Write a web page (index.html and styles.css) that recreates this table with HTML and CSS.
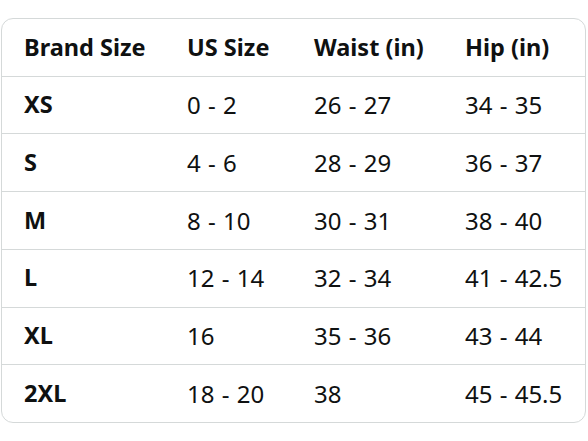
FILE: index.html
```html
<!DOCTYPE html>
<html>
<head>
<meta charset="utf-8">
<link rel="stylesheet" href="styles.css">
</head>
<body>
<div class="chart">
  <div class="row head">
    <div class="cell">Brand Size</div><div class="cell">US Size</div><div class="cell">Waist (in)</div><div class="cell">Hip (in)</div>
  </div>
  <div class="row">
    <div class="cell b">XS</div><div class="cell">0 - 2</div><div class="cell">26 - 27</div><div class="cell">34 - 35</div>
  </div>
  <div class="row">
    <div class="cell b">S</div><div class="cell">4 - 6</div><div class="cell">28 - 29</div><div class="cell">36 - 37</div>
  </div>
  <div class="row">
    <div class="cell b">M</div><div class="cell">8 - 10</div><div class="cell">30 - 31</div><div class="cell">38 - 40</div>
  </div>
  <div class="row">
    <div class="cell b">L</div><div class="cell">12 - 14</div><div class="cell">32 - 34</div><div class="cell">41 - 42.5</div>
  </div>
  <div class="row">
    <div class="cell b">XL</div><div class="cell">16</div><div class="cell">35 - 36</div><div class="cell">43 - 44</div>
  </div>
  <div class="row last">
    <div class="cell b">2XL</div><div class="cell">18 - 20</div><div class="cell">38</div><div class="cell">45 - 45.5</div>
  </div>
</div>
</body>
</html>
```
FILE: styles.css
```css
html, body { margin: 0; padding: 0; background: #fff; }
body { padding: 18px 2px 0 1px; font-family: "Noto Sans", sans-serif; color: #0f1111; }
.chart {
  border: 1px solid #d5d9d9;
  border-radius: 12px;
  width: 583px;
  height: 403px;
  display: flex;
  flex-direction: column;
  overflow: hidden;
}
.row {
  flex: 1;
  display: grid;
  grid-template-columns: 163px 127px 151px 1fr;
  align-items: center;
  border-bottom: 1px solid #d5d9d9;
}
.row.last { border-bottom: none; }
.cell { padding-left: 22px; font-size: 24px; line-height: 1; word-spacing: 1px; }
.head .cell, .cell.b { font-weight: 700; font-size: 23.5px; word-spacing: 0; }
```
